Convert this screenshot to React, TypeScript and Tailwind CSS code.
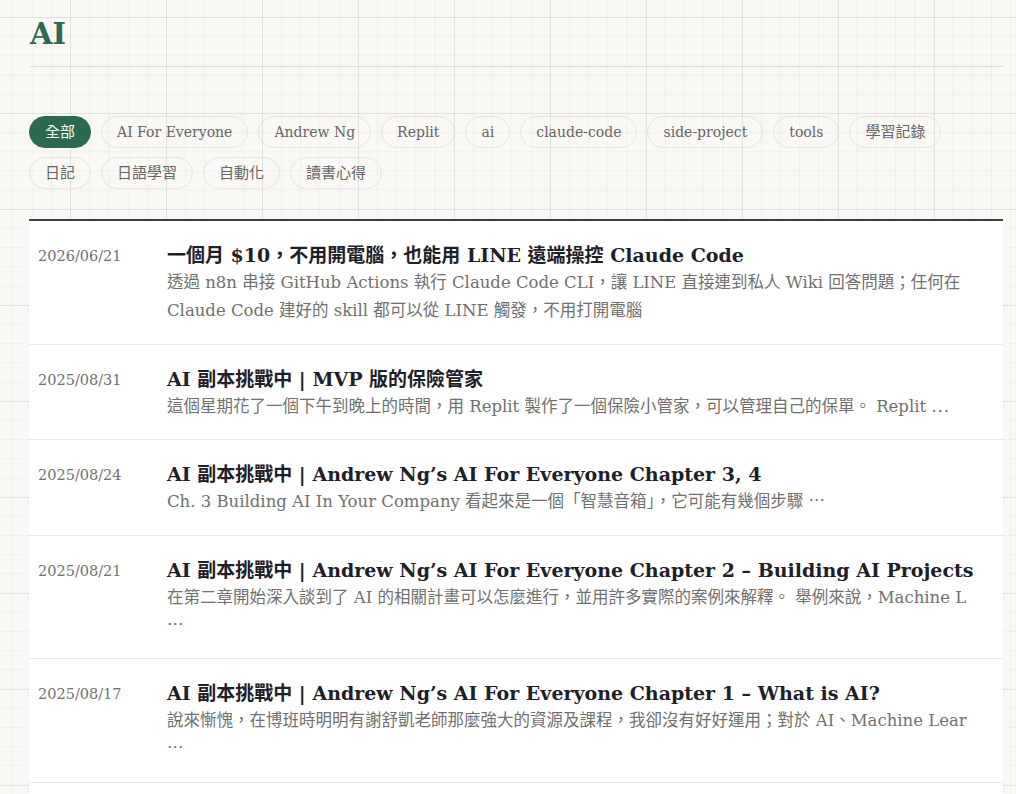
import React from "react";

const tags: { t: string; cjk: boolean }[] = [
  { t: "全部", cjk: true },
  { t: "AI For Everyone", cjk: false },
  { t: "Andrew Ng", cjk: false },
  { t: "Replit", cjk: false },
  { t: "ai", cjk: false },
  { t: "claude-code", cjk: false },
  { t: "side-project", cjk: false },
  { t: "tools", cjk: false },
  { t: "學習記錄", cjk: true },
  { t: "日記", cjk: true },
  { t: "日語學習", cjk: true },
  { t: "自動化", cjk: true },
  { t: "讀書心得", cjk: true },
];

type Post = { date: string; title: string; lines: string[] };

const posts: Post[] = [
  {
    date: "2026/06/21",
    title: "一個月 $10，不用開電腦，也能用 LINE 遠端操控 Claude Code",
    lines: [
      "透過 n8n 串接 GitHub Actions 執行 Claude Code CLI，讓 LINE 直接連到私人 Wiki 回答問題；任何在",
      "Claude Code 建好的 skill 都可以從 LINE 觸發，不用打開電腦",
    ],
  },
  {
    date: "2025/08/31",
    title: "AI 副本挑戰中 | MVP 版的保險管家",
    lines: ["這個星期花了一個下午到晚上的時間，用 Replit 製作了一個保險小管家，可以管理自己的保單。 Replit ⋯"],
  },
  {
    date: "2025/08/24",
    title: "AI 副本挑戰中 | Andrew Ng’s AI For Everyone Chapter 3, 4",
    lines: ["Ch. 3 Building AI In Your Company 看起來是一個「智慧音箱」，它可能有幾個步驟 ⋯"],
  },
  {
    date: "2025/08/21",
    title: "AI 副本挑戰中 | Andrew Ng’s AI For Everyone Chapter 2 – Building AI Projects",
    lines: ["在第二章開始深入談到了 AI 的相關計畫可以怎麼進行，並用許多實際的案例來解釋。 舉例來說，Machine L", "⋯"],
  },
  {
    date: "2025/08/17",
    title: "AI 副本挑戰中 | Andrew Ng’s AI For Everyone Chapter 1 – What is AI?",
    lines: ["說來慚愧，在博班時明明有謝舒凱老師那麼強大的資源及課程，我卻沒有好好運用；對於 AI、Machine Lear", "⋯"],
  },
];

export default function App() {
  return (
    <div className="min-h-screen bg-[#f9f8f4] bg-[linear-gradient(to_right,rgba(70,100,90,0.1)_1px,transparent_1px),linear-gradient(to_bottom,rgba(70,100,90,0.1)_1px,transparent_1px),linear-gradient(to_right,rgba(0,0,0,0.035)_1px,transparent_1px),linear-gradient(to_bottom,rgba(0,0,0,0.035)_1px,transparent_1px)] bg-[size:96px_96px,96px_96px,19.2px_19.2px,19.2px_19.2px] bg-[position:70px_17px,70px_17px,70px_17px,70px_17px] font-['DejaVu_Serif','Noto_Sans_CJK_TC',serif]">
      <div className="pl-[29px] pr-[13px] pt-[16px]">
        <div className="ml-px border-b border-[#dcdcd4] pb-[14px]">
          <h1 className="text-[29px] leading-[36px] font-bold text-[#2d6a4f]">AI</h1>
        </div>

        <div className="mt-[49px] flex flex-wrap gap-x-[10px] gap-y-[9px]">
          {tags.map(({ t, cjk }, i) =>
            i === 0 ? (
              <span
                key={t}
                className="h-[32px] rounded-full border border-[#2b6a4f] bg-[#2b6a4f] px-[15px] text-[15px] leading-[30px] text-white"
              >
                {t}
              </span>
            ) : cjk ? (
              <span
                key={t}
                className="h-[32px] rounded-full border border-[#e6e5df] px-[15px] text-[15px] leading-[30px] text-[#666]"
              >
                {t}
              </span>
            ) : (
              <span
                key={t}
                className="h-[32px] rounded-full border border-[#e6e5df] px-[15px] text-[14px] leading-[30px] text-[#666]"
              >
                {t}
              </span>
            )
          )}
        </div>

        <div className="mt-[30px] border-t-2 border-[#3d3d42] bg-white shadow-[0_1px_3px_rgba(0,0,0,0.04)]">
          {posts.map((p) => (
            <div key={p.date} className="flex border-b border-[#e8e8e5] pt-5 pb-[18.5px]">
              <div className="w-[138px] shrink-0 pl-[9px] pt-px text-[14.5px] leading-[28px] text-[#707070]">
                {p.date}
              </div>
              <div className="min-w-0 flex-1 pr-[20px]">
                <h2 className="whitespace-nowrap text-[19px] leading-[28px] font-bold text-[#1e2029]">
                  {p.title}
                </h2>
                <div className="text-[16.5px] leading-[28px] text-[#707070]">
                  {p.lines.map((l, i) => (
                    <div key={i} className="whitespace-nowrap">
                      {l}
                    </div>
                  ))}
                </div>
              </div>
            </div>
          ))}
          <div className="h-[40px]" />
        </div>
      </div>
    </div>
  );
}
